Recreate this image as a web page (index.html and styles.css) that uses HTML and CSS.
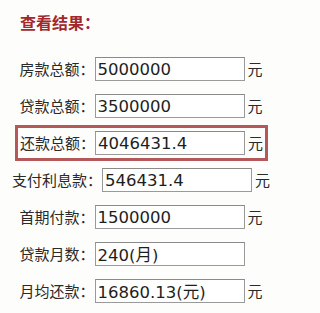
FILE: index.html
```html
<!DOCTYPE html>
<html lang="zh">
<head>
<meta charset="utf-8">
<title>查看结果</title>
<link rel="stylesheet" href="styles.css">
</head>
<body>
<div class="page">
  <div class="title">查看结果：</div>
  <div class="rows">
    <div class="row"><span class="label">房款总额：</span><input class="field" type="text" value="5000000"><span class="unit">元</span></div>
    <div class="row"><span class="label">贷款总额：</span><input class="field" type="text" value="3500000"><span class="unit">元</span></div>
    <div class="row highlight"><span class="label">还款总额：</span><input class="field" type="text" value="4046431.4"><span class="unit">元</span></div>
    <div class="row"><span class="label">支付利息款：</span><input class="field" type="text" value="546431.4"><span class="unit">元</span></div>
    <div class="row"><span class="label">首期付款：</span><input class="field" type="text" value="1500000"><span class="unit">元</span></div>
    <div class="row"><span class="label">贷款月数：</span><input class="field" type="text" value="240(月)"><span class="unit hidden">元</span></div>
    <div class="row"><span class="label">月均还款：</span><input class="field" type="text" value="16860.13(元)"><span class="unit">元</span></div>
  </div>
</div>
</body>
</html>
```
FILE: styles.css
```css
html, body {
  margin: 0;
  padding: 0;
  background: #fdfdfb;
}
.page {
  width: 301px;
  height: 313px;
  overflow: hidden;
  font-family: "Noto Sans CJK SC", "Liberation Sans", sans-serif;
  color: #2a2a2a;
}
.title {
  margin: 13px 0 0 20px;
  height: 18px;
  line-height: 18px;
  font-size: 16px;
  font-weight: bold;
  color: #a3282c;
}
.rows {
  margin-top: 26px;
  padding-right: 19px;
  display: flex;
  flex-direction: column;
  gap: 13px;
}
.row {
  display: flex;
  justify-content: center;
  align-items: center;
  height: 24px;
}
.label {
  font-size: 15px;
  line-height: 24px;
  white-space: nowrap;
}
.field {
  box-sizing: border-box;
  width: 150px;
  height: 24px;
  margin: 0;
  padding: 0 0 0 2px;
  border: 1px solid #9a9a9a;
  border-top-color: #8a8a8a;
  background: #fff;
  font-family: "DejaVu Sans", "Noto Sans CJK SC", sans-serif;
  font-size: 16.5px;
  color: #1e1e1e;
  outline: none;
}
.unit {
  margin-left: 3px;
  font-size: 15px;
  line-height: 24px;
}
.hidden {
  visibility: hidden;
}
.highlight {
  outline: 3px solid #b4585a;
  outline-offset: 3px;
  margin: 0 20px 0 21px;
}
```
